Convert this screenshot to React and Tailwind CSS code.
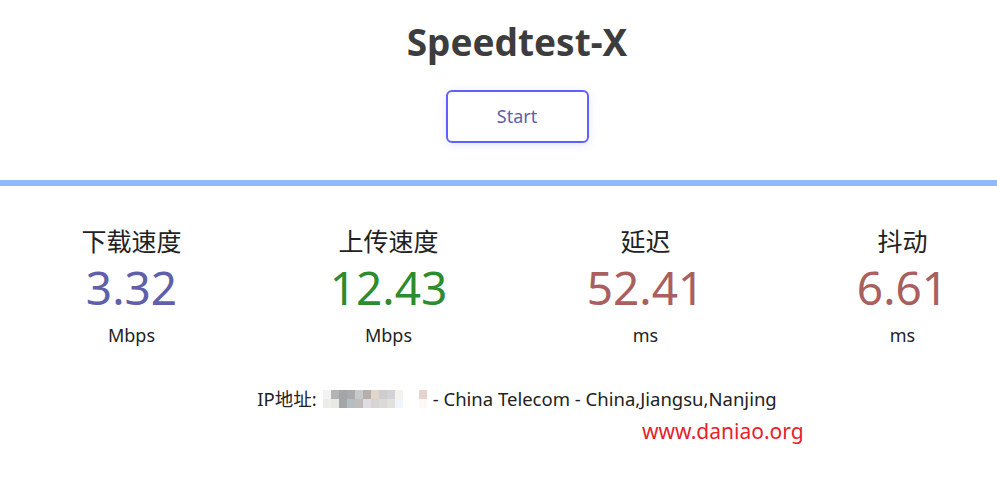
import React from 'react';

const FONT = { fontFamily: '"Noto Sans", "Noto Sans CJK SC", sans-serif' };

const STATS = [
  { label: '下载速度', value: '3.32', unit: 'Mbps', color: 'text-[#6060aa]' },
  { label: '上传速度', value: '12.43', unit: 'Mbps', color: 'text-[#2e8b2e]' },
  { label: '延迟', value: '52.41', unit: 'ms', color: 'text-[#aa5f5f]' },
  { label: '抖动', value: '6.61', unit: 'ms', color: 'text-[#aa5f5f]' }
];

// mosaic over the IP address
const MOSAIC = [
  ['#f2f2f4', '#b2b4b4', '#a2a6a6', '#aaaaaa', '#c6cacd', '#b6aeaa', '#e2d6c8', '#cdcdcf', '#d2d2d6', '#f5f1ed', '#ffffff', '#ffffff', '#e4d4cc'],
  ['#ececea', '#e8e8e4', '#a2a6a6', '#b4bcc4', '#c0bcbc', '#e0dce4', '#d6d6d6', '#ddd9d9', '#e0e0dc', '#f0f4fc', '#ffffff', '#ffffff', '#fcf8f4']
];

const App = () => {
  return (
    <div className="w-[997px] h-[491px] bg-white overflow-hidden" style={FONT}>
      {/* page is wider than the window, content is centred on 1034px */}
      <div className="w-[1034px]">
        <div className="flex flex-col items-center pt-[17px]">
          <h1 className="text-[37px] leading-[50px] font-bold text-[#3d3d3d]">Speedtest-X</h1>
          <button className="mt-[23px] w-[143px] h-[53px] rounded-[6px] border-2 border-[#6060ff] bg-white text-[18px] text-[#6060aa] shadow-[0_2px_8px_rgba(96,96,255,0.15)]">
            Start
          </button>
        </div>

        <div className="mt-[37px] h-[6px] bg-[#8fb9fb]" />

        <div className="flex ml-[3px] mt-[40px]">
          {STATS.map((s) => (
            <div key={s.label} className="w-[257px] shrink-0 flex flex-col items-center">
              <div className="text-[25px] leading-[30px] text-[#222]">{s.label}</div>
              <div className={`mt-[4px] text-[46px] leading-[54px] ${s.color}`}>{s.value}</div>
              <div className="mt-[9px] text-[18px] leading-[24px] text-[#222]">{s.unit}</div>
            </div>
          ))}
        </div>

        <div className="mt-[40px] flex items-center justify-center text-[18.5px] leading-[24px] text-[#222]">
          <span>IP地址: </span>
          <span className="inline-flex flex-col ml-[6px] mr-[6px]">
            {MOSAIC.map((row, i) => (
              <span key={i} className="flex">
                {row.map((c, j) => (
                  <span key={j} className="w-[8px] h-[9px]" style={{ background: c }} />
                ))}
              </span>
            ))}
          </span>
          <span>- China Telecom - China,Jiangsu,Nanjing</span>
        </div>

        <div className="mt-[6px] pl-[642px] text-[21px] leading-[28px] text-[#e8212b]">www.daniao.org</div>
      </div>
    </div>
  );
};

export default App;
